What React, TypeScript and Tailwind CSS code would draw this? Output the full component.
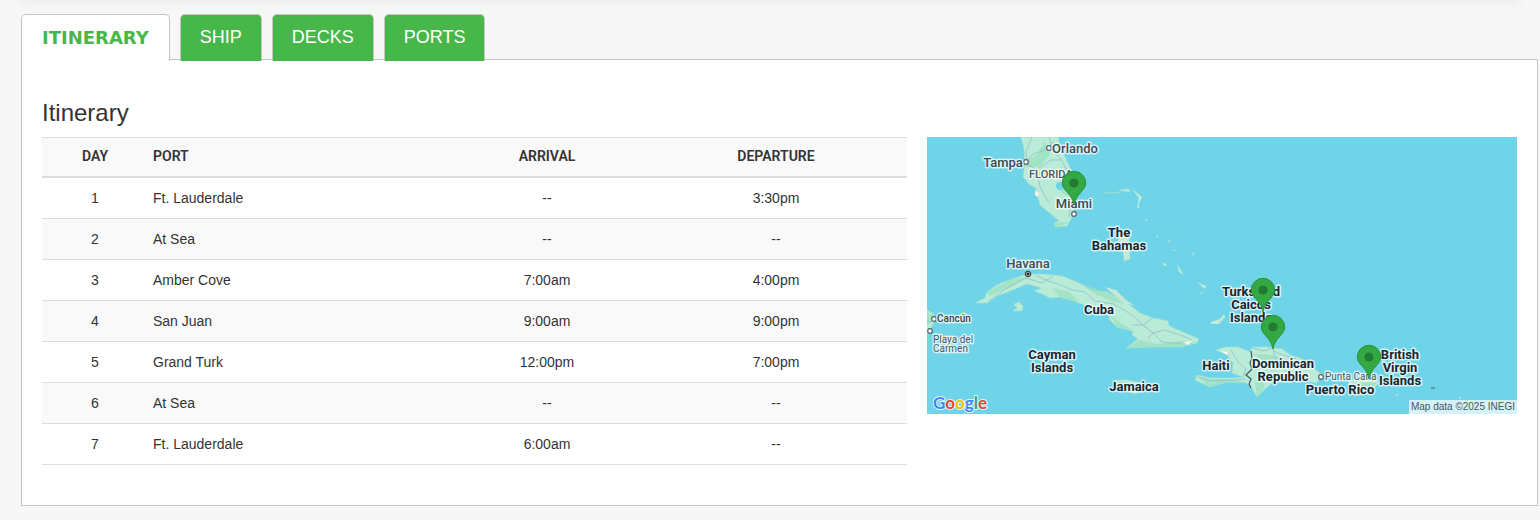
import { useState } from 'react'
import clsx from 'clsx'

interface Stop {
  port: string
  arrival: string
  departure: string
}

interface MapLabel {
  x: number
  y: number
  lines: string[]
  lineHeight?: number
}

const TABS = ['ITINERARY', 'SHIP', 'DECKS', 'PORTS']

const STOPS: Stop[] = [
  { port: 'Ft. Lauderdale', arrival: '--', departure: '3:30pm' },
  { port: 'At Sea', arrival: '--', departure: '--' },
  { port: 'Amber Cove', arrival: '7:00am', departure: '4:00pm' },
  { port: 'San Juan', arrival: '9:00am', departure: '9:00pm' },
  { port: 'Grand Turk', arrival: '12:00pm', departure: '7:00pm' },
  { port: 'At Sea', arrival: '--', departure: '--' },
  { port: 'Ft. Lauderdale', arrival: '6:00am', departure: '--' }
]

const LAND = [
  // Florida
  'M94 0 97 12 98 25 96 40 103 48 109 51 113 68 125 78 132 84 127 86 128 90 140 89 144 82 146 74 147 60 146 45 142 28 137 18 133 8 131 0Z',
  // Cuba
  'M48 166 58 161 60 155 70 148 85 142 100 137 115 137 135 139 150 145 165 153 180 155 200 166 213 176 226 181 241 184 242 189 256 195 272 202 270 206 253 210 226 210 199 211 211 202 205 198 206 194 190 190 183 183 181 176 157 168 147 164 133 160 123 161 115 157 107 154 115 151 100 147 83 154 70 159 60 166Z',
  // Isla de la Juventud
  'M87 167 92 165 96 169 95 174 86 174 90 171Z',
  // Yucatan
  'M0 173 7 177 7 185 4 191 0 196Z',
  // Hispaniola
  'M289 213 298 210 311 210 323 215 325 210 340 210 355 212 363 218 373 221 386 231 394 237 390 246 378 244 365 244 345 246 338 252 330 260 325 251 320 246 300 245 283 250 268 243 270 238 283 241 306 241 316 240 305 236 306 226 300 218Z',
  // Jamaica
  'M189 243 200 243 216 246 223 251 208 257 196 253 187 250Z',
  // Puerto Rico
  'M421 243 448 242 452 246 447 251 423 251Z'
]

const FORESTS = [
  'M97 25 110 18 118 4 123 18 112 30 98 30Z',
  'M129 45 137 45 142 60 135 56Z',
  'M126 86 136 85 142 86 128 90Z',
  'M60 155 85 142 100 140 86 149 63 159Z',
  'M125 151 143 155 152 165 133 160Z',
  'M151 145 167 151 180 155 198 167 184 164 170 158Z',
  'M183 178 197 188 206 193 190 190Z',
  'M199 211 213 203 230 207 252 204 270 205 253 210Z',
  'M269 239 284 242 306 242 320 246 300 245 283 250Z',
  'M326 217 342 218 362 222 356 230 340 226Z',
  'M328 244 338 240 337 251 330 260Z',
  'M0 175 7 178 7 184 0 188Z',
  'M190 244 214 247 205 252 196 251Z',
  'M425 247 450 245 446 251 427 251Z'
]

const ISLETS = [
  'M191 53 202 52 203 55 197 54Z',
  'M210 71 212 61 205 52 215 60 212 66 212 71Z',
  'M193 95 206 93 202 98 203 122 197 124 196 114 190 108Z',
  'M218 82 221 83 219 84Z',
  'M229 99 231 99 231 101Z',
  'M241 102 244 105 242 105Z',
  'M246 113 248 112 248 114Z',
  'M265 115 267 117 266 119Z',
  'M235 125 240 128 237 129Z',
  'M250 127 253 132 257 138 252 135Z',
  'M178 150 189 153 199 163 208 169 198 166 186 157Z',
  'M270 145 279 149 278 152Z',
  'M272 157 278 154 274 157Z',
  'M284 185 293 182 297 177 298 180 292 187 284 187Z',
  'M121 223 133 221 129 224Z',
  'M468 258 472 257 470 259Z',
  'M532 260 534 260 533 263Z'
]

const ROADS = [
  'M105 0 99 15 101 28 110 33 113 50 122 66',
  'M97 27 106 17 121 12 127 4',
  'M122 0 126 13 134 22 142 38 145 60 142 80',
  'M112 31 124 23 134 23',
  'M62 164 80 151 99 141 115 146 126 139',
  'M109 138 121 144 134 148 145 153 158 155 168 164 187 167 205 178 216 188 226 196',
  'M205 188 216 188 226 196 238 193 256 199 265 203',
  'M216 188 226 181M221 201 226 196 235 205 254 207',
  'M304 213 311 225 319 232 316 240',
  'M325 211 337 214 345 211 350 216 370 222',
  'M346 213 350 226 360 235',
  'M271 240 285 244 306 243 319 242',
  'M0 185 6 184'
]

const COUNTRIES: MapLabel[] = [
  { x: 192, y: 100, lines: ['The', 'Bahamas'] },
  { x: 172, y: 177, lines: ['Cuba'] },
  { x: 125, y: 222, lines: ['Cayman', 'Islands'] },
  { x: 207, y: 254, lines: ['Jamaica'] },
  { x: 289, y: 233, lines: ['Haiti'] },
  { x: 324, y: 159, lines: ['Turks and', 'Caicos', 'Islands'] },
  { x: 356, y: 231, lines: ['Dominican', 'Republic'] },
  { x: 413, y: 257, lines: ['Puerto Rico'] },
  { x: 473, y: 222, lines: ['British', 'Virgin', 'Islands'] }
]

const CITIES: MapLabel[] = [
  { x: 148, y: 16, lines: ['Orlando'] },
  { x: 76, y: 30, lines: ['Tampa'] },
  { x: 147, y: 71, lines: ['Miami'] },
  { x: 101, y: 131, lines: ['Havana'] }
]

const CITY_DOTS = [
  [122, 11],
  [99, 25],
  [147, 77],
  [7, 182],
  [3, 194],
  [394, 240]
]

const PINS = [
  [336, 175],
  [346, 212],
  [147, 68],
  [442, 242]
]

function LabelText({ label }: { label: MapLabel }) {
  return (
    <text textAnchor="middle">
      {label.lines.map((line, i) => (
        <tspan key={line} x={label.x} y={label.y + i * (label.lineHeight ?? 13)}>
          {line}
        </tspan>
      ))}
    </text>
  )
}

function Pin({ x, y }: { x: number; y: number }) {
  return (
    <g transform={`translate(${x} ${y})`}>
      <path
        d="M0 0C-1.5-7-4-9.500-7.500-13.500C-10-16.500-11.700-18.500-11.700-22A11.700 11.700 0 0 1 11.700-22C11.700-18.500 10-16.500 7.500-13.500C4-9.500 1.500-7 0 0Z"
        fill="#34a843"
        stroke="#2a9038"
        strokeWidth="1"
      />
      <circle cy="-22" r="4.600" fill="#237b32" />
    </g>
  )
}

function RouteMap() {
  return (
    <svg
      viewBox="0 0 590 277"
      role="img"
      aria-label="Map of the ports of call"
      className="block w-full font-[Roboto,sans-serif]"
    >
      <rect width="590" height="277" fill="#70d4e9" />
      <g fill="#b9ebd6" stroke="#a3e3d3" strokeWidth="0.6" strokeLinejoin="round">
        {LAND.map((d) => <path key={d} d={d} />)}
      </g>
      <g fill="#94dfbd" opacity="0.6">
        {FORESTS.map((d) => <path key={d} d={d} />)}
      </g>
      <g fill="#c5e9d5">
        {ISLETS.map((d) => <path key={d} d={d} />)}
      </g>
      <path d="M176 57 182 55 185 56 195 55" fill="none" stroke="#9fdfcb" strokeWidth="1.200" />
      <g fill="none" stroke="#95bfd0" strokeWidth="1" opacity="0.8">
        {ROADS.map((d) => <path key={d} d={d} />)}
      </g>
      <path d="M108 53 112 56 111 60 108 58ZM257 205 266 204 260 208ZM294 214 301 215 300 218Z" fill="#fbf3ed" />
      <ellipse cx="133" cy="49" rx="4" ry="4" fill="#70d4e9" />
      <path d="M324 214 325 221 323 226 325 232 319 238 324 242 322 247 324 251" fill="none" stroke="#43575b" strokeWidth="1.200" />
      <path d="M504 251h4" stroke="#5f5550" strokeWidth="1" />

      <g fill="#fff" stroke="#5a6265" strokeWidth="1.200">
        {CITY_DOTS.map(([x, y]) => <circle key={x} cx={x} cy={y} r="2.300" />)}
      </g>
      <circle cx="101" cy="137" r="2.800" fill="#aaa" stroke="#333" strokeWidth="1" />
      <circle cx="101" cy="137" r="1.200" fill="#222" />

      <g stroke="#fff" strokeWidth="3" strokeLinejoin="round" strokeOpacity="0.7" className="[paint-order:stroke]">
        <g fill="#17272e" className="text-[13px] font-bold">
          {COUNTRIES.map((label) => <LabelText key={label.lines[0]} label={label} />)}
        </g>
        <g fill="#3c4b50" className="text-[13px] font-medium">
          {CITIES.map((label) => <LabelText key={label.lines[0]} label={label} />)}
        </g>
        <g fill="#4a5a60" className="text-[10px]">
          <text x="102" y="41" className="text-[11px] font-medium">FLORIDA</text>
          <text x="10" y="185" fill="#34454b" className="font-medium">Cancún</text>
          <text x="6" y="206">Playa del</text>
          <text x="6" y="215">Carmen</text>
          <text x="398" y="243">Punta Cana</text>
        </g>
      </g>

      {PINS.map(([x, y]) => <Pin key={x} x={x} y={y} />)}

      <text
        x="6"
        y="272"
        stroke="#fff"
        strokeWidth="2"
        strokeOpacity="0.8"
        className="font-[Lato,sans-serif] text-[17px] font-bold [paint-order:stroke]"
      >
        <tspan fill="#4285f4">G</tspan>
        <tspan fill="#ea4335">o</tspan>
        <tspan fill="#fbbc04">o</tspan>
        <tspan fill="#4285f4">g</tspan>
        <tspan fill="#34a853">l</tspan>
        <tspan fill="#ea4335">e</tspan>
      </text>

      <rect x="482" y="263" width="108" height="14" fill="#fff" opacity="0.7" />
      <text x="588" y="273" textAnchor="end" fill="#49585c" className="font-['Liberation_Sans',sans-serif] text-[10px]">
        Map data ©2025 INEGI
      </text>
    </svg>
  )
}

export default function App() {
  const [activeTab, setActiveTab] = useState('ITINERARY')

  return (
    <div className="min-h-screen overflow-hidden bg-[#f7f7f7] font-['Liberation_Sans',Arial,sans-serif] text-sm text-[#333]">
      <div className="mx-5 -mt-4 h-4 shadow-[0_0_14px_rgba(0,0,0,0.08)]" />

      <div className="pt-3.5 pr-0.5 pb-3.5 pl-[21px]">
        <div role="tablist" className="relative flex items-start gap-2.5">
          {TABS.map((tab) => (
            <button
              key={tab}
              role="tab"
              aria-selected={activeTab === tab}
              onClick={() => setActiveTab(tab)}
              className={clsx(
                '-mb-0.5 h-[47px] cursor-pointer rounded-t-[5px] border border-b-0 border-[#c5c5c5] text-lg',
                activeTab === tab
                  ? "bg-white px-5 font-['DejaVu_Sans',sans-serif] font-bold text-[#48b749]"
                  : 'bg-[#48b749] px-[19px] pb-0.5 text-white'
              )}
            >
              {tab}
            </button>
          ))}
        </div>

        <div role="tabpanel" className="border border-[#c5c5c5] bg-white px-5 pt-9 pb-10">
          <h2 className="mb-2 text-2xl leading-[33px]">Itinerary</h2>
          <div className="flex items-start gap-5">
            <div className="min-w-0 flex-1">
              <table className="w-full table-fixed border-separate border-spacing-0 text-center">
                <colgroup>
                  <col className="w-[106px]" />
                  <col className="w-[301px]" />
                  <col className="w-[196px]" />
                  <col className="w-[262px]" />
                </colgroup>
                <thead>
                  <tr className="h-[41px] bg-[#f9f9f9] font-[Roboto,sans-serif] *:border-t *:border-b-2 *:border-[#ddd] *:pb-0.5 *:font-semibold">
                    <th scope="col">DAY</th>
                    <th scope="col" className="pl-[5px] text-left">PORT</th>
                    <th scope="col">ARRIVAL</th>
                    <th scope="col">DEPARTURE</th>
                  </tr>
                </thead>
                <tbody>
                  {STOPS.map((stop, i) => (
                    <tr key={i} className="h-[41px] even:bg-[#f9f9f9] *:border-b *:border-[#ddd]">
                      <td>{i + 1}</td>
                      <td className="pl-[5px] text-left">{stop.port}</td>
                      <td>{stop.arrival}</td>
                      <td>{stop.departure}</td>
                    </tr>
                  ))}
                </tbody>
              </table>
            </div>
            <div className="w-2/5 shrink-0">
              <RouteMap />
            </div>
          </div>
        </div>
      </div>
    </div>
  )
}
